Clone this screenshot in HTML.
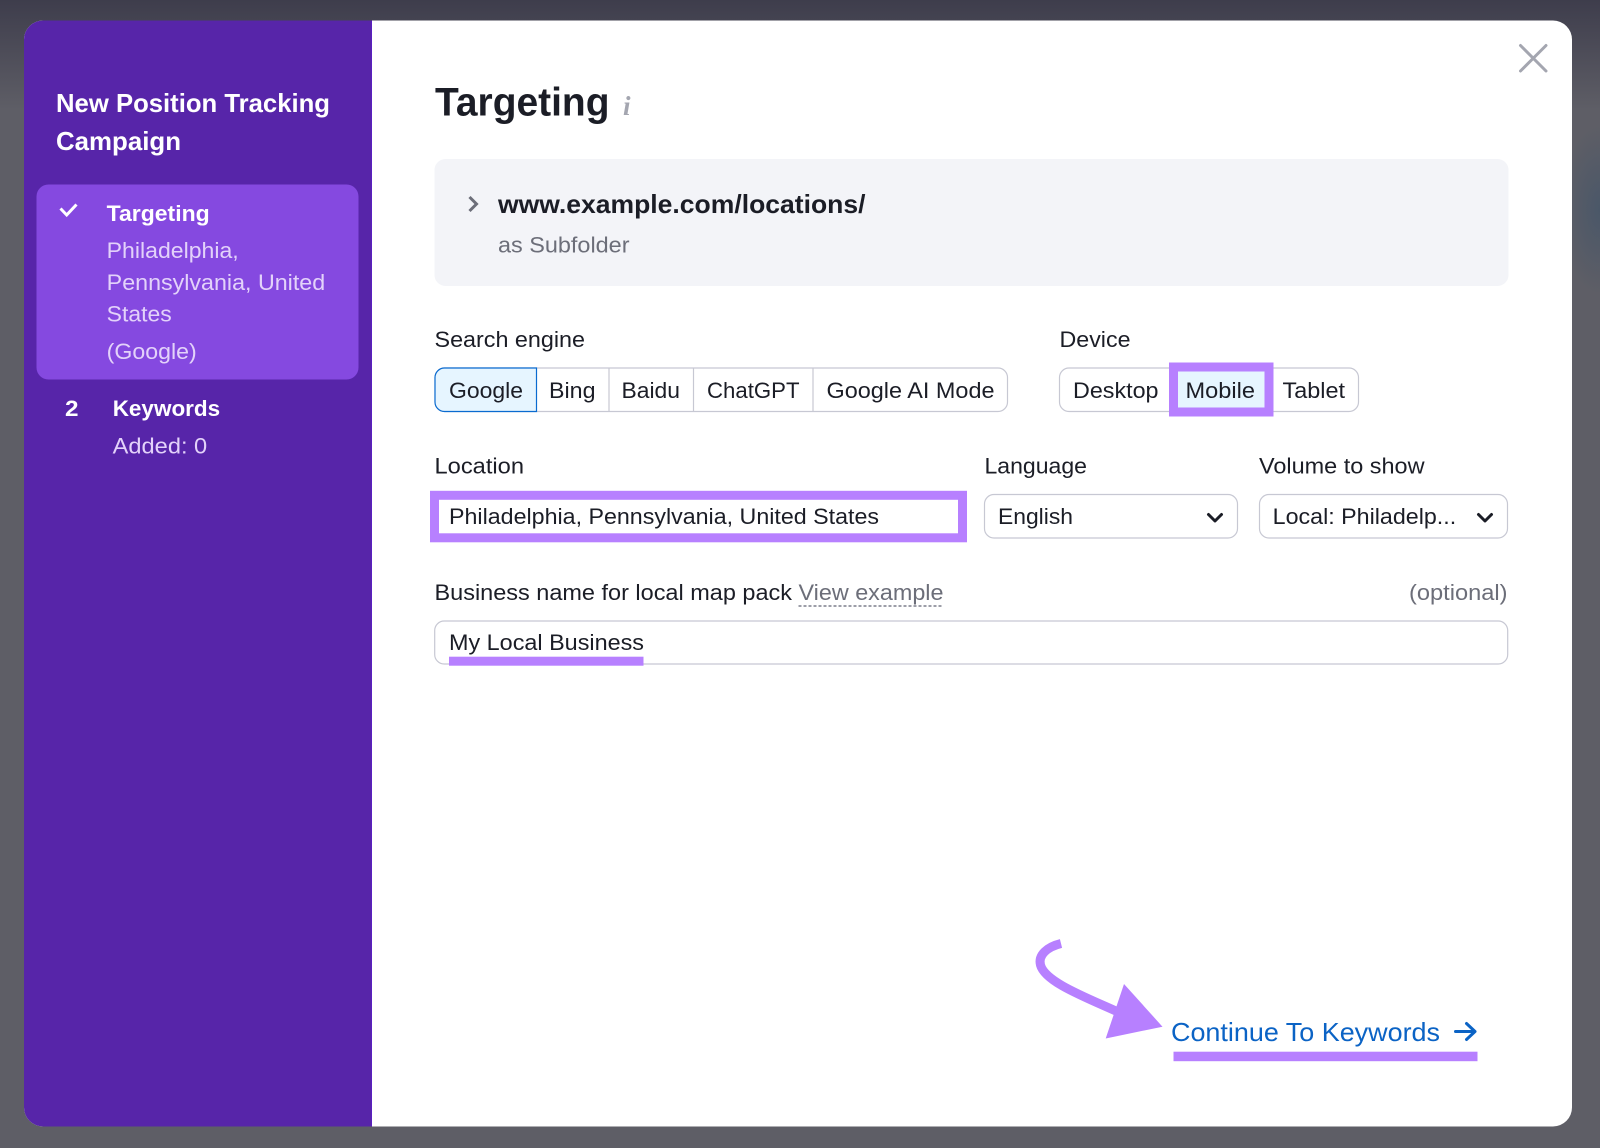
<!DOCTYPE html>
<html lang="en">
<head>
<meta charset="utf-8">
<title>Targeting</title>
<style>
html,body{margin:0;padding:0;width:1600px;height:1148px;overflow:hidden;background:#5e5e66}
svg{display:block}
text{font-family:"Liberation Sans",Arial,sans-serif;font-size:22.5px;fill:#1b1d26}
.b{font-weight:700}
.g{fill:#6c6e79}
.l{fill:#e3d2fa}
.w{fill:#fff}
</style>
</head>
<body>
<svg width="1600" height="1148" viewBox="0 0 1600 1148" xmlns="http://www.w3.org/2000/svg">
<defs>
<linearGradient id="top" x1="0" y1="0" x2="0" y2="1">
<stop offset="0" stop-color="#3e3d4c"/>
<stop offset="1" stop-color="#3e3d4c" stop-opacity="0"/>
</linearGradient>
<radialGradient id="blue" cx="0.5" cy="0.5" r="0.5">
<stop offset="0" stop-color="#4a5768"/>
<stop offset="1" stop-color="#4a5768" stop-opacity="0"/>
</radialGradient>
<clipPath id="modal"><rect x="24" y="20.5" width="1548" height="1106" rx="19"/></clipPath>
</defs>

<!-- backdrop -->
<rect width="1600" height="1148" fill="#5e5e66"/>
<rect width="1600" height="110" fill="url(#top)"/>
<ellipse cx="1600" cy="210" rx="40" ry="85" fill="url(#blue)"/>

<!-- modal -->
<g clip-path="url(#modal)">
<rect x="24" y="20" width="1548" height="1107" fill="#fff"/>
<rect x="24" y="20" width="348" height="1107" fill="#5725a9"/>
<rect x="371" y="20" width="1" height="1107" fill="#5a1fc0"/>
</g>

<!-- sidebar -->
<text class="b w" x="56" y="112" style="font-size:26px" textLength="274" lengthAdjust="spacingAndGlyphs">New Position Tracking</text>
<text class="b w" x="56" y="150" style="font-size:26px" textLength="125" lengthAdjust="spacingAndGlyphs">Campaign</text>
<rect x="36.5" y="184.5" width="322" height="195" rx="12" fill="#8549e0"/>
<path d="M60.5 208.5L66.7 215L76.5 204.5" fill="none" stroke="#fff" stroke-width="3"/>
<text class="b w" x="106.7" y="221" textLength="103" lengthAdjust="spacingAndGlyphs">Targeting</text>
<text class="l" x="106.7" y="258" textLength="132" lengthAdjust="spacingAndGlyphs">Philadelphia,</text>
<text class="l" x="106.7" y="290" textLength="218.500" lengthAdjust="spacingAndGlyphs">Pennsylvania, United</text>
<text class="l" x="106.7" y="321.500" textLength="65" lengthAdjust="spacingAndGlyphs">States</text>
<text class="l" x="106.7" y="359" textLength="90" lengthAdjust="spacingAndGlyphs">(Google)</text>
<text class="b w" x="65" y="416" textLength="13.500" lengthAdjust="spacingAndGlyphs">2</text>
<text class="b w" x="112.700" y="416" textLength="107.500" lengthAdjust="spacingAndGlyphs">Keywords</text>
<text class="l" x="112.700" y="453.500" textLength="94.500" lengthAdjust="spacingAndGlyphs">Added: 0</text>

<!-- close -->
<path d="M1520.5 45.5L1546 71M1546 45.5L1520.5 71" fill="none" stroke="#a4a6b0" stroke-width="3" stroke-linecap="round"/>

<!-- heading -->
<text class="b" x="435" y="115.500" style="font-size:40px" textLength="174.500" lengthAdjust="spacingAndGlyphs">Targeting</text>
<text x="623" y="115" style="font-family:'Liberation Serif',serif;font-style:italic;font-weight:700;font-size:27px;fill:#a4a6b0">i</text>

<!-- url box -->
<rect x="434.500" y="159" width="1074" height="127" rx="11" fill="#f3f4f8"/>
<path d="M469.5 197L476.5 204L469.5 211" fill="none" stroke="#6c6e79" stroke-width="3"/>
<text class="b" x="498" y="213" style="font-size:26px" textLength="367.500" lengthAdjust="spacingAndGlyphs">www.example.com/locations/</text>
<text class="g" x="498" y="252.500" textLength="131.500" lengthAdjust="spacingAndGlyphs">as Subfolder</text>

<!-- search engine -->
<text x="434.500" y="347" textLength="150.500" lengthAdjust="spacingAndGlyphs">Search engine</text>
<rect x="435" y="368" width="572.500" height="43.500" rx="9.5" fill="#fff" stroke="#c7c8d3" stroke-width="1.2"/>
<path d="M609 368V411.500M693.500 368V411.500M813 368V411.500" stroke="#c7c8d3" stroke-width="1.2"/>
<path d="M536.500 368H444.500a9.5 9.5 0 0 0-9.5 9.500V402a9.5 9.5 0 0 0 9.5 9.500H536.500Z" fill="#e6f5ff" stroke="#0a6bd0" stroke-width="1.2"/>
<text x="449" y="398" textLength="74" lengthAdjust="spacingAndGlyphs">Google</text>
<text x="549" y="398" textLength="46.500" lengthAdjust="spacingAndGlyphs">Bing</text>
<text x="621.500" y="398" textLength="58.500" lengthAdjust="spacingAndGlyphs">Baidu</text>
<text x="707" y="398" textLength="92.500" lengthAdjust="spacingAndGlyphs">ChatGPT</text>
<text x="826.500" y="398" textLength="168" lengthAdjust="spacingAndGlyphs">Google AI Mode</text>

<!-- device -->
<text x="1059.500" y="347" textLength="71" lengthAdjust="spacingAndGlyphs">Device</text>
<rect x="1059.500" y="368" width="299" height="43.500" rx="9.5" fill="#fff" stroke="#c7c8d3" stroke-width="1.2"/>
<rect x="1173.500" y="367" width="95.500" height="45" fill="#e6f5ff" stroke="#b780ff" stroke-width="9"/>
<text x="1073" y="398" textLength="85.500" lengthAdjust="spacingAndGlyphs">Desktop</text>
<text x="1185.500" y="398" textLength="69.500" lengthAdjust="spacingAndGlyphs">Mobile</text>
<text x="1282.500" y="398" textLength="62.500" lengthAdjust="spacingAndGlyphs">Tablet</text>

<!-- location -->
<text x="434.500" y="473.500" textLength="89.500" lengthAdjust="spacingAndGlyphs">Location</text>
<rect x="434.500" y="495.300" width="528" height="42.500" fill="#fff" stroke="#b780ff" stroke-width="9"/>
<text x="449" y="524" textLength="430" lengthAdjust="spacingAndGlyphs">Philadelphia, Pennsylvania, United States</text>

<!-- language -->
<text x="984.500" y="473.500" textLength="102.500" lengthAdjust="spacingAndGlyphs">Language</text>
<rect x="984.500" y="494.500" width="253" height="43.500" rx="9.5" fill="#fff" stroke="#c7c8d3" stroke-width="1.2"/>
<text x="998" y="524" textLength="75" lengthAdjust="spacingAndGlyphs">English</text>
<path d="M1208.500 514.500L1215 521L1221.500 514.500" fill="none" stroke="#1b1d26" stroke-width="3" stroke-linecap="round" stroke-linejoin="round"/>

<!-- volume -->
<text x="1259" y="473.500" textLength="165.500" lengthAdjust="spacingAndGlyphs">Volume to show</text>
<rect x="1259.500" y="494.500" width="248" height="43.500" rx="9.5" fill="#fff" stroke="#c7c8d3" stroke-width="1.2"/>
<text x="1272.700" y="524" textLength="183.500" lengthAdjust="spacingAndGlyphs">Local: Philadelp...</text>
<path d="M1478.500 514.500L1485 521L1491.500 514.500" fill="none" stroke="#1b1d26" stroke-width="3" stroke-linecap="round" stroke-linejoin="round"/>

<!-- business -->
<text x="434.500" y="600" textLength="357.500" lengthAdjust="spacingAndGlyphs">Business name for local map pack</text>
<text class="g" x="798.500" y="600" textLength="145" lengthAdjust="spacingAndGlyphs">View example</text>
<path d="M798.500 606H943.500" stroke="#7d7f8b" stroke-width="1.5" stroke-dasharray="3 2"/>
<text class="g" x="1409" y="600" textLength="98.500" lengthAdjust="spacingAndGlyphs">(optional)</text>
<rect x="434.700" y="621" width="1073" height="43" rx="9.5" fill="#fff" stroke="#c7c8d3" stroke-width="1.2"/>
<text x="449" y="650" textLength="195" lengthAdjust="spacingAndGlyphs">My Local Business</text>
<rect x="449" y="656.700" width="194.500" height="9" fill="#b780ff"/>

<!-- continue -->
<path d="M1061 943.500C1047 947 1038 955 1040.500 965C1045 982 1085 997 1118 1012" fill="none" stroke="#b780ff" stroke-width="9"/>
<path d="M1124 984L1162.500 1026.700L1105.700 1038.500Z" fill="#b780ff"/>
<text x="1171" y="1041" style="font-size:26px;fill:#0b63c5" textLength="269" lengthAdjust="spacingAndGlyphs">Continue To Keywords</text>
<path d="M1455.500 1031.500H1475M1466.500 1023.500L1475 1031.500L1466.500 1039.500" fill="none" stroke="#0b63c5" stroke-width="3" stroke-linecap="round" stroke-linejoin="round"/>
<rect x="1173.500" y="1051.700" width="304" height="9.500" fill="#b780ff"/>
</svg>
</body>
</html>
